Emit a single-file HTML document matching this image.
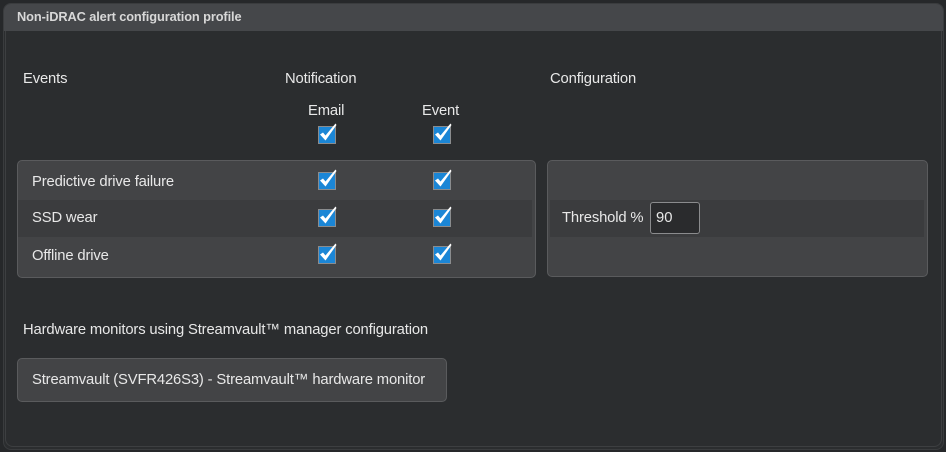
<!DOCTYPE html>
<html><head><style>
*{margin:0;padding:0;box-sizing:border-box}
body{width:946px;height:452px;background:#26282a;font-family:"Liberation Sans",sans-serif;color:#e8e8e8;position:relative;overflow:hidden;font-size:15px}
.abs{position:absolute}
.outer{left:3px;top:3px;width:941px;height:447px;border-radius:8px;background:#2b2d2f;border:1px solid #3a3c3e}
.hdr{left:4px;top:4px;width:939px;height:27px;background:#45474a;border-radius:7px 7px 0 0;font-weight:bold;font-size:12.8px;color:#d8d8d8;padding:5px 0 0 13px;letter-spacing:-0.1px}
.inner{left:5px;top:31px;width:937px;height:416px;border:1px solid #3d3f41;border-top:none;border-radius:0 0 8px 8px}
.t{position:absolute;white-space:nowrap;font-size:14.8px;letter-spacing:-0.15px}
.panel{background:#434446;border:1px solid #5a5b5d;border-radius:5px}
svg{overflow:visible}
</style></head><body>
<div class="abs outer"></div>
<div class="abs hdr">Non-iDRAC alert configuration profile</div>
<div class="abs inner"></div>

<div class="t" style="left:23px;top:71px">Events</div>
<div class="t" style="left:285px;top:71px">Notification</div>
<div class="t" style="left:550px;top:71px">Configuration</div>
<div class="t" style="left:308px;top:103px">Email</div>
<div class="t" style="left:422px;top:103px">Event</div>

<div class="abs panel" style="left:17px;top:160px;width:519px;height:118px"></div>
<div class="abs" style="left:18px;top:200px;width:514px;height:37px;background:#3b3c3e"></div>
<div class="t" style="left:32px;top:174px">Predictive drive failure</div>
<div class="t" style="left:32px;top:210px">SSD wear</div>
<div class="t" style="left:32px;top:248px">Offline drive</div>

<div class="abs panel" style="left:547px;top:160px;width:381px;height:117px"></div>
<div class="abs" style="left:550px;top:200px;width:374px;height:37px;background:#3b3c3e"></div>
<div class="t" style="left:562px;top:210px">Threshold %</div>
<div class="abs" style="left:650px;top:202px;width:50px;height:32px;background:#2a2b2d;border:1px solid #8a8b8d;border-radius:3px;padding:7px 0 0 5px;font-size:14.8px">90</div>

<div class="t" style="left:23px;top:322px">Hardware monitors using Streamvault™ manager configuration</div>
<div class="abs panel" style="left:17px;top:358px;width:430px;height:44px"></div>
<div class="t" style="left:32px;top:372px">Streamvault (SVFR426S3) - Streamvault™ hardware monitor</div>

<svg width="946" height="452" class="abs" style="left:0;top:0">
<defs><g id="c">
<rect x="0.5" y="0.5" width="17" height="17" fill="#1b86d6" stroke="#8a8c8e"/>
<path d="M2 8.5 L5 6.5 L7.5 9.5 L17.5 -2.5 L18.5 -1 L7.5 14.5 Z" fill="#fff"/>
</g></defs>
<use href="#c" x="318" y="126"/><use href="#c" x="433" y="126"/>
<use href="#c" x="318" y="172"/><use href="#c" x="433" y="172"/>
<use href="#c" x="318" y="209"/><use href="#c" x="433" y="209"/>
<use href="#c" x="318" y="246"/><use href="#c" x="433" y="246"/>
</svg>
</body></html>
